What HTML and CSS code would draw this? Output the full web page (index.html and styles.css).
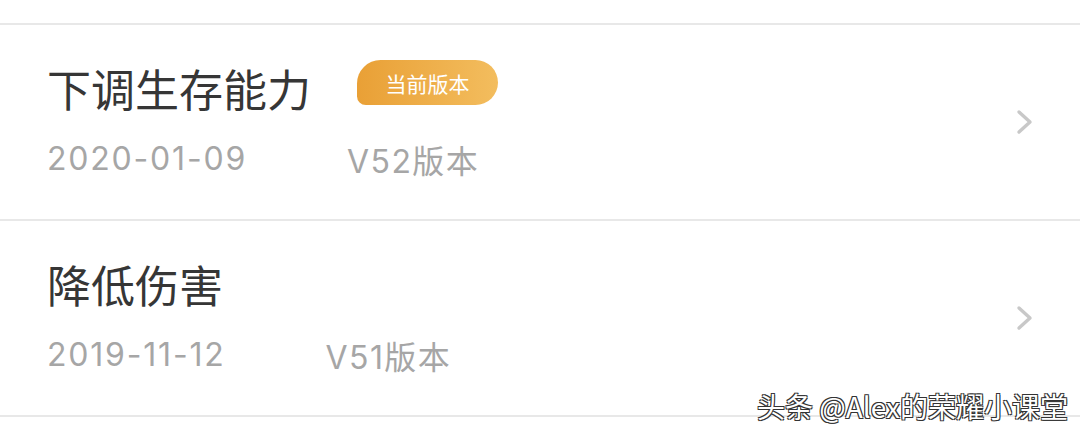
FILE: index.html
```
<!doctype html>
<html lang="zh-CN">
<head>
    <meta charset="UTF-8">
    <meta name="viewport" content="width=device-width, initial-scale=1.0">
    <title>版本记录</title>
    <link rel="stylesheet" href="styles.css">
</head>
<body>
    <div class="page">
        <div class="top-gap"></div>

        <div class="row">
            <div class="row-main">
                <div class="title-line">
                    <span class="title">下调生存能力</span>
                    <span class="badge">当前版本</span>
                </div>
                <div class="meta">
                    <span class="date">2020-01-09</span>
                    <span class="version">V52版本</span>
                </div>
            </div>
            <svg class="chevron" width="18" height="26" viewBox="0 0 18 26">
                <path d="M3 3 L14 13 L3 23" fill="none" stroke="#c8c8c8" stroke-width="3.4" stroke-linecap="round" stroke-linejoin="round"/>
            </svg>
        </div>

        <div class="row">
            <div class="row-main">
                <div class="title-line">
                    <span class="title">降低伤害</span>
                </div>
                <div class="meta">
                    <span class="date">2019-11-12</span>
                    <span class="version">V51版本</span>
                </div>
            </div>
            <svg class="chevron" width="18" height="26" viewBox="0 0 18 26">
                <path d="M3 3 L14 13 L3 23" fill="none" stroke="#c8c8c8" stroke-width="3.4" stroke-linecap="round" stroke-linejoin="round"/>
            </svg>
        </div>

        <div class="watermark">头条 @Alex的荣耀小课堂</div>
    </div>
</body>
</html>
```

FILE: styles.css
```
body {
    margin: 0;
    background: #fff;
    font-family: Inter, "Noto Sans CJK SC", sans-serif;
    overflow: hidden;
}

.page {
    position: relative;
    width: 1080px;
    height: 438px;
}

.top-gap {
    height: 23px;
    border-bottom: 2px solid #e8e8e8;
}

.row {
    display: flex;
    align-items: center;
    justify-content: space-between;
    height: 194px;
    padding: 0 46px 0 47px;
    border-bottom: 2px solid #e8e8e8;
}

.row-main {
    display: flex;
    flex-direction: column;
    gap: 26px;
    margin-top: -3px;
}

.title-line {
    display: flex;
    align-items: center;
    height: 50px;
}

.title {
    font-family: "Noto Sans CJK SC", sans-serif;
    font-size: 44px;
    line-height: 50px;
    color: #363636;
}

.badge {
    margin-left: 46px;
    margin-top: -10px;
    height: 45px;
    width: 141px;
    display: flex;
    align-items: center;
    justify-content: center;
    font-family: "Noto Sans CJK SC", sans-serif;
    font-size: 21px;
    color: #fff;
    background: linear-gradient(90deg, #e9a036, #f3bd5e);
    border-radius: 24px 23px 23px 9px;
}

.meta {
    display: flex;
    align-items: center;
    height: 40px;
    font-size: 32px;
    color: #a6a6a6;
}

.date, .version {
    font-family: Inter, "Noto Sans CJK SC", sans-serif;
    font-variant-numeric: proportional-nums;
    font-weight: 400;
}

.date {
    letter-spacing: 1.8px;
}

.version {
    margin-left: 100px;
    letter-spacing: 1.4px;
}

.chevron {
    flex: none;
}

.watermark {
    position: absolute;
    right: 12px;
    bottom: 15px;
    font-family: "Noto Sans CJK SC", sans-serif;
    font-size: 28px;
    line-height: 34px;
    color: #fff;
    text-shadow: -1px -1px 0 #333, 1px -1px 0 #333, -1px 1px 0 #333, 1px 1px 0 #333;
}
```
